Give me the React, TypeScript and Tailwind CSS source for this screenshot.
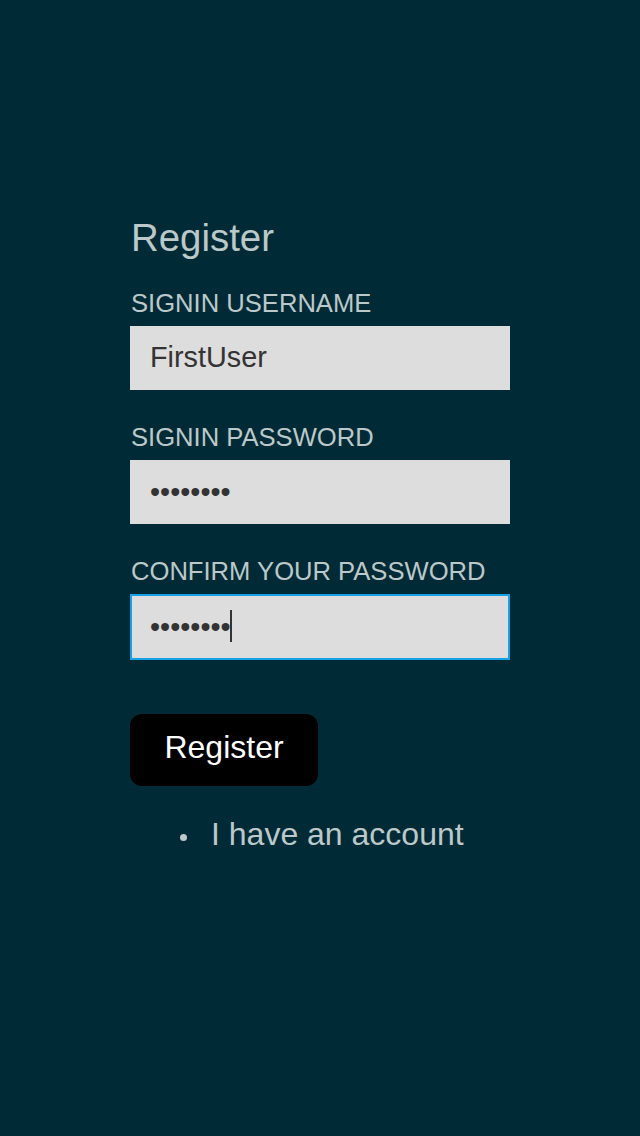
import React from 'react'

const Field = ({ label, children }: { label: string; children: React.ReactNode }) => {
    return (
        <div className="flex flex-col">
            <label className="h-[30px] pl-px text-[25.6px] leading-[30px] mb-2">{label}</label>
            {children}
        </div>
    )
}

const App = () => {
    return (
        <div className="min-h-screen w-full bg-[#002b36] text-[#bcc8c9] font-['Liberation_Sans',Arial,sans-serif]">
            <div className="mx-auto w-[380px] pt-[216px] pb-10">

                <h1 className="pl-px text-[38.4px] leading-[44px]">Register</h1>

                <div className="mt-[28px] flex flex-col gap-8">
                    <Field label="SIGNIN USERNAME">
                        <input
                            readOnly
                            type="text"
                            value="FirstUser"
                            className="h-[64px] w-full bg-[#dddddd] px-5 pb-[2px] text-[28.8px] text-[#333333] outline-none"
                        />
                    </Field>

                    <Field label="SIGNIN PASSWORD">
                        <input
                            readOnly
                            type="password"
                            value="12345678"
                            className="h-[64px] w-full bg-[#dddddd] px-5 text-[28.8px] text-[#333333] outline-none"
                        />
                    </Field>

                    <Field label="CONFIRM YOUR PASSWORD">
                        <div className="relative">
                            <input
                                readOnly
                                type="password"
                                value="12345678"
                                className="h-[66px] w-full border-2 border-[#16a0e6] bg-[#dddddd] px-[18px] text-[28.8px] text-[#333333] outline-none"
                            />
                            {/* caret */}
                            <span className="absolute left-[100px] top-[16px] h-[32px] w-[2px] bg-[#333333]" />
                        </div>
                    </Field>
                </div>

                <button className="mt-[54px] h-[72px] w-[188px] rounded-[12px] bg-black pb-[6px] text-[32px] text-white">
                    Register
                </button>

                <ul className="mt-[30px] pl-[50px] text-[32px] leading-[37px]">
                    <li className="flex items-center">
                        <span className="mt-[6px] mr-[24px] h-[7px] w-[7px] shrink-0 rounded-full bg-[#bcc8c9]" />
                        <a href="#">I have an account</a>
                    </li>
                </ul>

            </div>
        </div>
    )
}

export default App
